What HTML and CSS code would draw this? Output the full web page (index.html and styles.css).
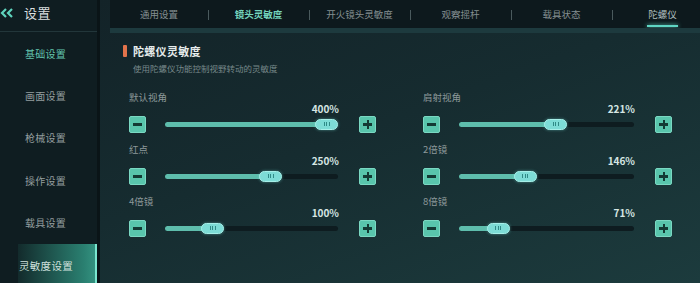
FILE: index.html
```html
<!DOCTYPE html>
<html lang="zh-CN">
<head>
<meta charset="utf-8">
<title>设置</title>
<link rel="stylesheet" href="styles.css">
</head>
<body>
<div class="app">
  <aside class="sidebar">
    <div class="side-head">
      <svg class="back" width="14" height="10" viewBox="0 0 14 10"><path d="M6 1 L2 5 L6 9 M12 1 L8 5 L12 9" fill="none" stroke="#5fd3bd" stroke-width="2.2"/></svg>
      <span class="side-title">设置</span>
    </div>
    <nav class="side-nav">
      <div class="side-item side-item-teal">基础设置</div>
      <div class="side-item">画面设置</div>
      <div class="side-item">枪械设置</div>
      <div class="side-item">操作设置</div>
      <div class="side-item">载具设置</div>
      <div class="side-item side-item-active">灵敏度设置</div>
    </nav>
  </aside>
  <main class="main">
    <div class="tabbar">
      <div class="tab">通用设置</div>
      <div class="tab tab-teal">镜头灵敏度</div>
      <div class="tab">开火镜头灵敏度</div>
      <div class="tab">观察摇杆</div>
      <div class="tab">载具状态</div>
      <div class="tab tab-under"><span>陀螺仪</span></div>
    </div>
    <div class="band"></div>
    <section class="content">
      <div class="title-row"><span class="mark"></span><span class="title">陀螺仪灵敏度</span></div>
      <div class="subtitle">使用陀螺仪功能控制视野转动的灵敏度</div>
      <div class="grid">
        <div class="setting">
          <div class="label">默认视角</div>
          <div class="value">400%</div>
          <div class="control">
            <span class="btn"><span class="bar-h"></span></span>
            <div class="track" style="--p:1"><span class="fill"></span><span class="thumb"><i></i><i></i><i></i></span></div>
            <span class="btn"><span class="bar-h"></span><span class="bar-v"></span></span>
          </div>
        </div>
        <div class="setting wide">
          <div class="label">肩射视角</div>
          <div class="value">221%</div>
          <div class="control">
            <span class="btn"><span class="bar-h"></span></span>
            <div class="track" style="--p:0.56"><span class="fill"></span><span class="thumb"><i></i><i></i><i></i></span></div>
            <span class="btn"><span class="bar-h"></span><span class="bar-v"></span></span>
          </div>
        </div>
        <div class="setting">
          <div class="label">红点</div>
          <div class="value">250%</div>
          <div class="control">
            <span class="btn"><span class="bar-h"></span></span>
            <div class="track" style="--p:0.627"><span class="fill"></span><span class="thumb"><i></i><i></i><i></i></span></div>
            <span class="btn"><span class="bar-h"></span><span class="bar-v"></span></span>
          </div>
        </div>
        <div class="setting wide">
          <div class="label">2倍镜</div>
          <div class="value">146%</div>
          <div class="control">
            <span class="btn"><span class="bar-h"></span></span>
            <div class="track" style="--p:0.36"><span class="fill"></span><span class="thumb"><i></i><i></i><i></i></span></div>
            <span class="btn"><span class="bar-h"></span><span class="bar-v"></span></span>
          </div>
        </div>
        <div class="setting">
          <div class="label">4倍镜</div>
          <div class="value">100%</div>
          <div class="control">
            <span class="btn"><span class="bar-h"></span></span>
            <div class="track" style="--p:0.24"><span class="fill"></span><span class="thumb"><i></i><i></i><i></i></span></div>
            <span class="btn"><span class="bar-h"></span><span class="bar-v"></span></span>
          </div>
        </div>
        <div class="setting wide">
          <div class="label">8倍镜</div>
          <div class="value">71%</div>
          <div class="control">
            <span class="btn"><span class="bar-h"></span></span>
            <div class="track" style="--p:0.184"><span class="fill"></span><span class="thumb"><i></i><i></i><i></i></span></div>
            <span class="btn"><span class="bar-h"></span><span class="bar-v"></span></span>
          </div>
        </div>
      </div>
    </section>
  </main>
</div>
</body>
</html>
```
FILE: styles.css
```css
* { box-sizing: border-box; }
html, body { margin: 0; padding: 0; }
body {
  width: 700px;
  height: 283px;
  overflow: hidden;
  background: #142a2e;
  font-family: "Noto Sans CJK SC", "Noto Sans", "Liberation Sans", sans-serif;
  color: #cfd8d8;
}
.app {
  display: flex;
  width: 700px;
  height: 283px;
}
.sidebar {
  width: 100px;
  flex: none;
  background: #0f1d21;
  border-right: 3px solid #0a1417;
  display: flex;
  flex-direction: column;
  overflow: hidden;
}
.side-head {
  height: 32px;
  flex: none;
  display: flex;
  align-items: center;
  border-bottom: 1px solid #22363a;
  padding-bottom: 6px;
}
.side-title {
  margin-left: 10px;
  font-size: 13px;
  color: #d9dfdf;
  letter-spacing: 0.5px;
}
.side-nav {
  display: flex;
  flex-direction: column;
}
.side-item {
  height: 42.4px;
  flex: none;
  display: flex;
  align-items: center;
  justify-content: center;
  padding-right: 6px;
  font-size: 10px;
  color: #939e9f;
  letter-spacing: 0.3px;
}
.side-item-teal { color: #62c3ac; }
.side-item-active {
  margin-left: 18px;
  padding-right: 10px;
  justify-content: flex-start;
  padding-left: 1px;
  color: #cfe0dc;
  background: linear-gradient(to right, rgba(40,120,105,0.15), #2a7f70 85%, #33917f);
  border-right: 2px solid #7ae6cf;
  font-size: 10.5px;
}
.main {
  flex: 1;
  display: flex;
  flex-direction: column;
  background: linear-gradient(160deg, #132328 0%, #162c30 45%, #1c3b3d 100%);
  min-width: 0;
}
.tabbar {
  height: 28px;
  margin-left: 10px;
  background: #0d191d;
  display: flex;
  overflow: hidden;
  flex: none;
}
.tab {
  width: 101px;
  flex: none;
  display: flex;
  align-items: center;
  justify-content: center;
  font-size: 9.5px;
  color: #848f91;
  position: relative;
}
.tab + .tab::before {
  content: "";
  position: absolute;
  left: 0;
  top: 10px;
  width: 1px;
  height: 10px;
  background: #4a5a5d;
}
.tab:first-child { width: 98px; }
.tab-teal { color: #74d4bd; font-weight: 700; }
.tab-under span {
  color: #aebfbf;
  position: relative;
  padding: 0 1px;
}
.tab-under span::after {
  content: "";
  position: absolute;
  left: 0;
  right: 0;
  bottom: -6px;
  height: 2px;
  background: #5fd6c4;
  box-shadow: 0 0 4px #5fd6c4;
}
.band {
  height: 5px;
  margin-left: 10px;
  background: #1d3a3e;
  flex: none;
}
.content {
  padding-left: 23px;
}
.title-row {
  margin-top: 10px;
  display: flex;
  align-items: center;
  height: 16px;
}
.mark {
  width: 4px;
  height: 12px;
  background: #e2734b;
  border-radius: 1px;
  margin-right: 6px;
}
.title {
  font-size: 11px;
  font-weight: 700;
  color: #e6ecec;
  letter-spacing: 0.3px;
}
.subtitle {
  margin-top: 3px;
  margin-left: 10px;
  font-size: 8.5px;
  line-height: 12px;
  color: #77888a;
}
.grid {
  margin-top: 17px;
  margin-left: 6px;
  display: grid;
  grid-template-columns: 247px 249px;
  column-gap: 47px;
  row-gap: 10px;
}
.label {
  font-size: 9.5px;
  line-height: 12px;
  color: #8d999a;
}
.value {
  font-size: 10px;
  line-height: 12px;
  font-weight: 700;
  color: #d6e6e3;
  text-align: right;
  padding-right: 37px;
}
.control {
  height: 18px;
  display: flex;
  align-items: center;
}
.btn {
  width: 17px;
  height: 17px;
  flex: none;
  background: #59c5ac;
  border: 1px solid #7ad8c2;
  border-radius: 2px;
  position: relative;
}
.bar-h {
  position: absolute;
  left: 3px;
  right: 3px;
  top: 6.5px;
  height: 2.5px;
  background: #143a34;
}
.bar-v {
  position: absolute;
  top: 3px;
  bottom: 3px;
  left: 6.5px;
  width: 2.5px;
  background: #143a34;
}
.track {
  flex: 1;
  height: 5px;
  margin: 0 21px 0 19px;
  background: #0e1c20;
  border-radius: 3px;
  position: relative;
}
.fill {
  position: absolute;
  left: 0;
  top: 0;
  bottom: 0;
  width: calc((100% - 23px) * var(--p) + 12px);
  background: #5ebdac;
  border-radius: 3px;
}
.thumb {
  position: absolute;
  top: -3px;
  left: calc((100% - 23px) * var(--p));
  width: 23px;
  height: 11px;
  background: #7ddcd6;
  border: 1px solid #a6efe8;
  border-radius: 6px;
  display: flex;
  align-items: center;
  justify-content: center;
  gap: 1.5px;
  box-shadow: 0 0 3px rgba(120,230,220,0.5);
}
.thumb i {
  width: 1px;
  height: 4px;
  background: #2f8a86;
}
```
